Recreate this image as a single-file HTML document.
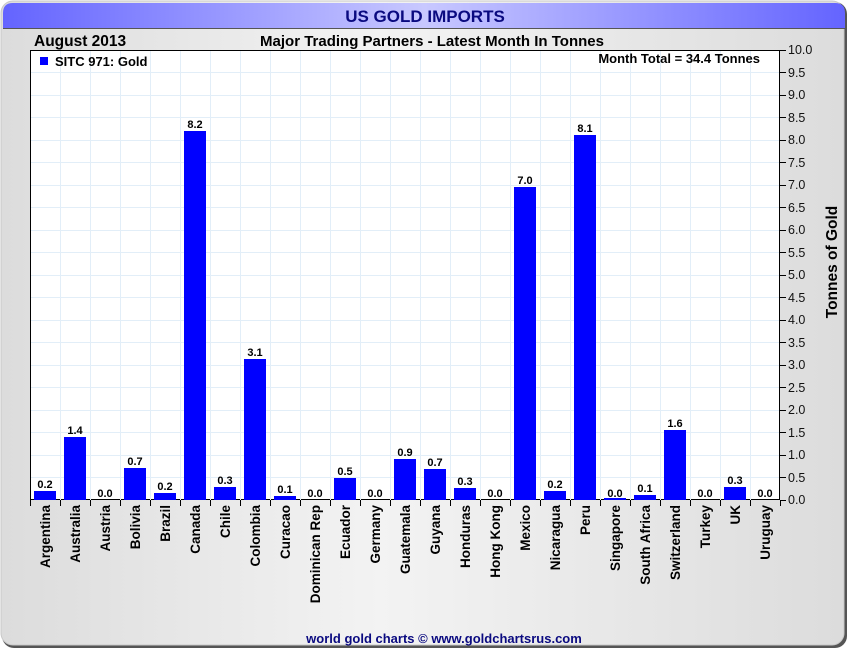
<!DOCTYPE html>
<html><head><meta charset="utf-8"><style>
html,body{margin:0;padding:0;background:#fff;}
svg{display:block;font-family:"Liberation Sans",Arial,sans-serif;}
</style></head><body>
<svg width="850" height="650" viewBox="0 0 850 650" xmlns="http://www.w3.org/2000/svg">
<defs>
<linearGradient id="tb" x1="0" x2="1" y1="0" y2="0">
<stop offset="0" stop-color="#6464ff"/><stop offset="0.5" stop-color="#c8c8ff"/><stop offset="1" stop-color="#6464ff"/>
</linearGradient>
<linearGradient id="bg" x1="0" x2="1" y1="0" y2="0">
<stop offset="0" stop-color="#dcdcdc"/><stop offset="0.45" stop-color="#f3f3f3"/><stop offset="1" stop-color="#dcdcdc"/>
</linearGradient>
</defs>
<rect x="0" y="0" width="850" height="650" fill="#fff"/>
<rect x="2" y="2" width="845" height="646" rx="12" fill="#555"/>
<rect x="1" y="1" width="843" height="644" rx="12" fill="url(#bg)" stroke="#c8c8c8"/>
<path d="M3,28 L3,13 Q3,3 13,3 L835,3 Q845,3 845,13 L845,28 Z" fill="url(#tb)"/>
<line x1="3" y1="28.5" x2="845" y2="28.5" stroke="#555"/>
<text x="425" y="22" text-anchor="middle" font-size="17" font-weight="bold" fill="#0a0a80">US GOLD IMPORTS</text>
<text x="34" y="46" font-size="15.5" font-weight="bold" fill="#000">August 2013</text>
<text x="432" y="46" text-anchor="middle" font-size="15" font-weight="bold" fill="#000">Major Trading Partners - Latest Month In Tonnes</text>
<rect x="30.5" y="50.5" width="749" height="449" fill="#fff" stroke="#000"/>
<g stroke="#e2eef8" stroke-width="1">
<path d="M60.5,51V500M90.5,51V500M120.5,51V500M150.5,51V500M180.5,51V500M210.5,51V500M240.5,51V500M270.5,51V500M300.5,51V500M330.5,51V500M360.5,51V500M390.5,51V500M420.5,51V500M450.5,51V500M480.5,51V500M510.5,51V500M540.5,51V500M570.5,51V500M600.5,51V500M630.5,51V500M660.5,51V500M690.5,51V500M720.5,51V500M750.5,51V500"/>
<path d="M31,477.5H779M31,455.5H779M31,432.5H779M31,410.5H779M31,387.5H779M31,365.5H779M31,342.5H779M31,320.5H779M31,297.5H779M31,275.5H779M31,252.5H779M31,230.5H779M31,207.5H779M31,185.5H779M31,162.5H779M31,140.5H779M31,117.5H779M31,95.5H779M31,72.5H779"/>
</g>
<rect x="40" y="57" width="8" height="8" fill="#0000ff"/>
<text x="55" y="66" font-size="13" font-weight="bold">SITC 971: Gold</text>
<text x="760" y="63" text-anchor="end" font-size="13" font-weight="bold">Month Total = 34.4 Tonnes</text>
<g fill="#0000ff">
<rect x="34" y="491" width="22" height="9"/>
<rect x="64" y="437" width="22" height="63"/>
<rect x="124" y="468" width="22" height="32"/>
<rect x="154" y="493" width="22" height="7"/>
<rect x="184" y="131" width="22" height="369"/>
<rect x="214" y="487" width="22" height="13"/>
<rect x="244" y="359" width="22" height="141"/>
<rect x="274" y="496" width="22" height="4"/>
<rect x="334" y="478" width="22" height="22"/>
<rect x="394" y="459" width="22" height="41"/>
<rect x="424" y="469" width="22" height="31"/>
<rect x="454" y="488" width="22" height="12"/>
<rect x="514" y="187" width="22" height="313"/>
<rect x="544" y="491" width="22" height="9"/>
<rect x="574" y="135" width="22" height="365"/>
<rect x="604" y="498" width="22" height="2"/>
<rect x="634" y="495" width="22" height="5"/>
<rect x="664" y="430" width="22" height="70"/>
<rect x="724" y="487" width="22" height="13"/>
</g>
<g font-size="11" font-weight="bold" text-anchor="middle">
<text x="45" y="488">0.2</text><text x="75" y="434">1.4</text><text x="105" y="497">0.0</text><text x="135" y="465">0.7</text><text x="165" y="490">0.2</text><text x="195" y="128">8.2</text><text x="225" y="484">0.3</text><text x="255" y="356">3.1</text><text x="285" y="493">0.1</text><text x="315" y="497">0.0</text><text x="345" y="475">0.5</text><text x="375" y="497">0.0</text><text x="405" y="456">0.9</text><text x="435" y="466">0.7</text><text x="465" y="485">0.3</text><text x="495" y="497">0.0</text><text x="525" y="184">7.0</text><text x="555" y="488">0.2</text><text x="585" y="132">8.1</text><text x="615" y="497">0.0</text><text x="645" y="492">0.1</text><text x="675" y="427">1.6</text><text x="705" y="497">0.0</text><text x="735" y="484">0.3</text><text x="765" y="497">0.0</text>
</g>
<g stroke="#000">
<path d="M30.5,500V506M60.5,500V506M90.5,500V506M120.5,500V506M150.5,500V506M180.5,500V506M210.5,500V506M240.5,500V506M270.5,500V506M300.5,500V506M330.5,500V506M360.5,500V506M390.5,500V506M420.5,500V506M450.5,500V506M480.5,500V506M510.5,500V506M540.5,500V506M570.5,500V506M600.5,500V506M630.5,500V506M660.5,500V506M690.5,500V506M720.5,500V506M750.5,500V506M780.5,500V506"/>
<path d="M780,500.5H786M780,477.5H786M780,455.5H786M780,432.5H786M780,410.5H786M780,387.5H786M780,365.5H786M780,342.5H786M780,320.5H786M780,297.5H786M780,275.5H786M780,252.5H786M780,230.5H786M780,207.5H786M780,185.5H786M780,162.5H786M780,140.5H786M780,117.5H786M780,95.5H786M780,72.5H786M780,50.5H786"/>
</g>
<g font-size="12.5" fill="#111">
<text x="788" y="504">0.0</text><text x="788" y="482">0.5</text><text x="788" y="459">1.0</text><text x="788" y="437">1.5</text><text x="788" y="414">2.0</text><text x="788" y="392">2.5</text><text x="788" y="369">3.0</text><text x="788" y="347">3.5</text><text x="788" y="324">4.0</text><text x="788" y="302">4.5</text><text x="788" y="279">5.0</text><text x="788" y="257">5.5</text><text x="788" y="234">6.0</text><text x="788" y="212">6.5</text><text x="788" y="189">7.0</text><text x="788" y="167">7.5</text><text x="788" y="144">8.0</text><text x="788" y="122">8.5</text><text x="788" y="99">9.0</text><text x="788" y="77">9.5</text><text x="788" y="54">10.0</text>
</g>
<text transform="translate(837,262) rotate(-90)" text-anchor="middle" font-size="15.5" font-weight="bold">Tonnes of Gold</text>
<g font-size="13.5" font-weight="bold" text-anchor="end">
<text transform="translate(50,505) rotate(-90)">Argentina</text>
<text transform="translate(80,505) rotate(-90)">Australia</text>
<text transform="translate(110,505) rotate(-90)">Austria</text>
<text transform="translate(140,505) rotate(-90)">Bolivia</text>
<text transform="translate(170,505) rotate(-90)">Brazil</text>
<text transform="translate(200,505) rotate(-90)">Canada</text>
<text transform="translate(230,505) rotate(-90)">Chile</text>
<text transform="translate(260,505) rotate(-90)">Colombia</text>
<text transform="translate(290,505) rotate(-90)">Curacao</text>
<text transform="translate(320,505) rotate(-90)">Dominican Rep</text>
<text transform="translate(350,505) rotate(-90)">Ecuador</text>
<text transform="translate(380,505) rotate(-90)">Germany</text>
<text transform="translate(410,505) rotate(-90)">Guatemala</text>
<text transform="translate(440,505) rotate(-90)">Guyana</text>
<text transform="translate(470,505) rotate(-90)">Honduras</text>
<text transform="translate(500,505) rotate(-90)">Hong Kong</text>
<text transform="translate(530,505) rotate(-90)">Mexico</text>
<text transform="translate(560,505) rotate(-90)">Nicaragua</text>
<text transform="translate(590,505) rotate(-90)">Peru</text>
<text transform="translate(620,505) rotate(-90)">Singapore</text>
<text transform="translate(650,505) rotate(-90)">South Africa</text>
<text transform="translate(680,505) rotate(-90)">Switzerland</text>
<text transform="translate(710,505) rotate(-90)">Turkey</text>
<text transform="translate(740,505) rotate(-90)">UK</text>
<text transform="translate(770,505) rotate(-90)">Uruguay</text>
</g>
<text x="444" y="643" text-anchor="middle" font-size="13" font-weight="bold" fill="#0a0a80">world gold charts © www.goldchartsrus.com</text>
</svg>
</body></html>
